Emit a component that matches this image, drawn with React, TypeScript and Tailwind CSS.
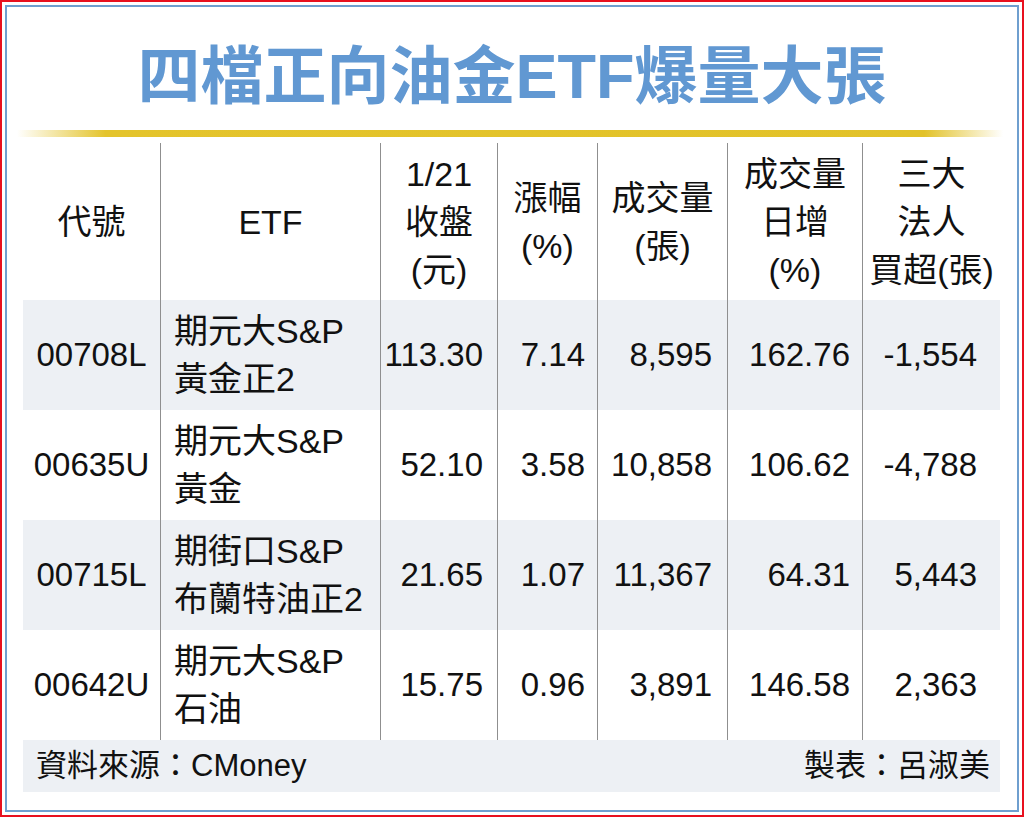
import React from "react";

const FONT = '"Liberation Sans", "Noto Sans CJK TC", Arial, sans-serif';

type Row = {
  code: string;
  name: [string, string];
  close: string;
  chg: string;
  vol: string;
  volInc: string;
  inst: string;
};

const rows: Row[] = [
  { code: "00708L", name: ["期元大S&P", "黃金正2"], close: "113.30", chg: "7.14", vol: "8,595", volInc: "162.76", inst: "-1,554" },
  { code: "00635U", name: ["期元大S&P", "黃金"], close: "52.10", chg: "3.58", vol: "10,858", volInc: "106.62", inst: "-4,788" },
  { code: "00715L", name: ["期街口S&P", "布蘭特油正2"], close: "21.65", chg: "1.07", vol: "11,367", volInc: "64.31", inst: "5,443" },
  { code: "00642U", name: ["期元大S&P", "石油"], close: "15.75", chg: "0.96", vol: "3,891", volInc: "146.58", inst: "2,363" },
];

const gridCols = "grid grid-cols-[137px_220px_117px_100px_130px_135px_138px]";
const div = "border-l border-[#8f8f8f]";

export default function App() {
  return (
    <div
      className="w-[1024px] h-[817px] border-2 border-[#e8101e] bg-white p-[3px] text-[#111]"
      style={{ fontFamily: FONT }}
    >
      <div className="h-full w-full border-2 border-[#6f9fcf] bg-white px-[16px] flex flex-col">
        {/* Title */}
        <div className="pt-[38px] flex justify-center">
          <div className="text-[63px] leading-[62px] font-bold text-[#6198d2]">
            四檔正向油金ETF爆量大張
          </div>
        </div>
        {/* gold bar */}
        <div className="mt-[23px] -ml-[6px] -mr-[2px] h-[7px] bg-[linear-gradient(to_right,rgba(226,194,40,0)_0%,#e4c42c_9%,#e2c229_92%,rgba(226,194,40,0)_100%)]" />

        {/* Table */}
        <div className="mt-[6px] w-[977px]">
          {/* Header */}
          <div className={`${gridCols} h-[157px] text-[34px] leading-[48px]`}>
            <div className="flex items-center justify-center">代號</div>
            <div className={`${div} flex items-center justify-center`}>ETF</div>
            <div className={`${div} flex items-center justify-center text-center`}>
              <div>1/21<br />收盤<br />(元)</div>
            </div>
            <div className={`${div} flex items-center justify-center text-center`}>
              <div>漲幅<br />(%)</div>
            </div>
            <div className={`${div} flex items-center justify-center text-center`}>
              <div>成交量<br />(張)</div>
            </div>
            <div className={`${div} flex items-center justify-center text-center`}>
              <div>成交量<br />日增<br />(%)</div>
            </div>
            <div className={`${div} flex items-center justify-center text-center`}>
              <div>三大<br />法人<br />買超(張)</div>
            </div>
          </div>

          {/* Body rows */}
          {rows.map((r, i) => (
            <div
              key={r.code}
              className={`${gridCols} h-[110px] text-[34px] leading-[48px] ${i % 2 === 0 ? "bg-[#edf0f4]" : "bg-white"}`}
            >
              <div className="flex items-center justify-center text-[33px]">{r.code}</div>
              <div className={`${div} flex items-center pl-[13px]`}>
                <div>
                  {r.name[0]}
                  <br />
                  {r.name[1]}
                </div>
              </div>
              <div className={`${div} flex items-center justify-end pr-[14px] text-[33px]`}>{r.close}</div>
              <div className={`${div} flex items-center justify-end pr-[12px] text-[33px]`}>{r.chg}</div>
              <div className={`${div} flex items-center justify-end pr-[15px] text-[33px]`}>{r.vol}</div>
              <div className={`${div} flex items-center justify-end pr-[12px] text-[33px]`}>{r.volInc}</div>
              <div className={`${div} flex items-center justify-end pr-[23px] text-[33px]`}>{r.inst}</div>
            </div>
          ))}

          {/* Footer */}
          <div className="h-[52px] bg-[#edf0f4] flex items-center justify-between pl-[13px] pr-[10px] text-[31px] leading-[40px]">
            <span>資料來源：CMoney</span>
            <span>製表：呂淑美</span>
          </div>
        </div>
      </div>
    </div>
  );
}
